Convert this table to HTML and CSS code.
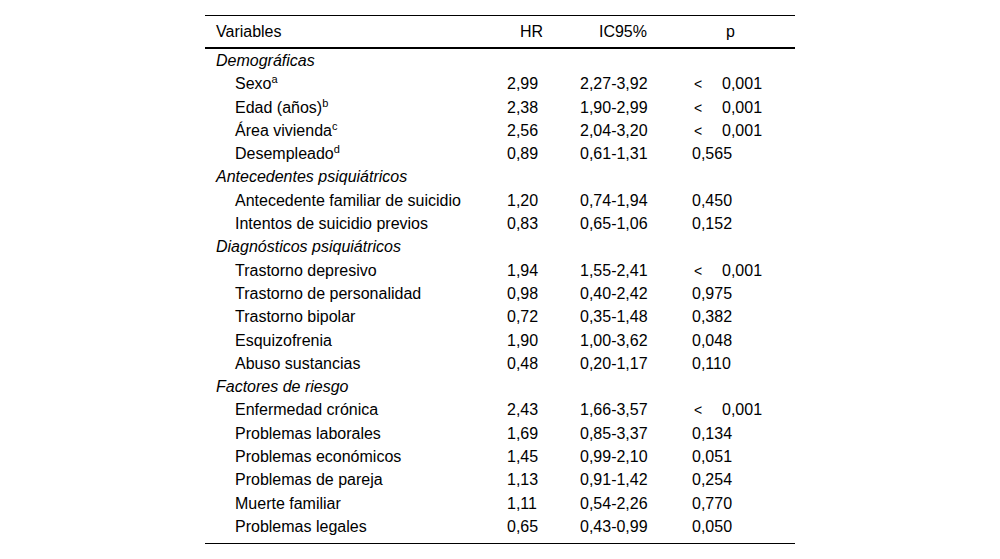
FILE: index.html
```html
<!DOCTYPE html>
<html lang="es">
<head>
<meta charset="utf-8">
<title>Tabla</title>
<link rel="stylesheet" href="styles.css">
</head>
<body>
<table class="tbl">
  <colgroup>
    <col class="c-var">
    <col class="c-hr">
    <col class="c-ic">
    <col class="c-p">
  </colgroup>
  <thead>
    <tr>
      <th class="h-var">Variables</th>
      <th class="h-hr">HR</th>
      <th class="h-ic">IC95%</th>
      <th class="h-p">p</th>
    </tr>
  </thead>
  <tbody>
    <tr class="sec"><td><em>Demográficas</em></td><td></td><td></td><td></td></tr>
    <tr><td class="ind">Sexo<sup>a</sup></td><td>2,99</td><td>2,27-3,92</td><td><span class="lt">&lt;</span>0,001</td></tr>
    <tr><td class="ind">Edad (años)<sup>b</sup></td><td>2,38</td><td>1,90-2,99</td><td><span class="lt">&lt;</span>0,001</td></tr>
    <tr><td class="ind">Área vivienda<sup>c</sup></td><td>2,56</td><td>2,04-3,20</td><td><span class="lt">&lt;</span>0,001</td></tr>
    <tr><td class="ind">Desempleado<sup>d</sup></td><td>0,89</td><td>0,61-1,31</td><td>0,565</td></tr>
    <tr class="sec"><td><em>Antecedentes psiquiátricos</em></td><td></td><td></td><td></td></tr>
    <tr><td class="ind">Antecedente familiar de suicidio</td><td>1,20</td><td>0,74-1,94</td><td>0,450</td></tr>
    <tr><td class="ind">Intentos de suicidio previos</td><td>0,83</td><td>0,65-1,06</td><td>0,152</td></tr>
    <tr class="sec"><td><em>Diagnósticos psiquiátricos</em></td><td></td><td></td><td></td></tr>
    <tr><td class="ind">Trastorno depresivo</td><td>1,94</td><td>1,55-2,41</td><td><span class="lt">&lt;</span>0,001</td></tr>
    <tr><td class="ind">Trastorno de personalidad</td><td>0,98</td><td>0,40-2,42</td><td>0,975</td></tr>
    <tr><td class="ind">Trastorno bipolar</td><td>0,72</td><td>0,35-1,48</td><td>0,382</td></tr>
    <tr><td class="ind">Esquizofrenia</td><td>1,90</td><td>1,00-3,62</td><td>0,048</td></tr>
    <tr><td class="ind">Abuso sustancias</td><td>0,48</td><td>0,20-1,17</td><td>0,110</td></tr>
    <tr class="sec"><td><em>Factores de riesgo</em></td><td></td><td></td><td></td></tr>
    <tr><td class="ind">Enfermedad crónica</td><td>2,43</td><td>1,66-3,57</td><td><span class="lt">&lt;</span>0,001</td></tr>
    <tr><td class="ind">Problemas laborales</td><td>1,69</td><td>0,85-3,37</td><td>0,134</td></tr>
    <tr><td class="ind">Problemas económicos</td><td>1,45</td><td>0,99-2,10</td><td>0,051</td></tr>
    <tr><td class="ind">Problemas de pareja</td><td>1,13</td><td>0,91-1,42</td><td>0,254</td></tr>
    <tr><td class="ind">Muerte familiar</td><td>1,11</td><td>0,54-2,26</td><td>0,770</td></tr>
    <tr class="last"><td class="ind">Problemas legales</td><td>0,65</td><td>0,43-0,99</td><td>0,050</td></tr>
  </tbody>
</table>
</body>
</html>
```
FILE: styles.css
```css
html, body {
  margin: 0;
  padding: 0;
  background: #ffffff;
}

body {
  font-family: "Liberation Sans", Arial, sans-serif;
  font-size: 16px;
  color: #000000;
}

.tbl {
  margin: 15px auto 0;
  width: 590px;
  table-layout: fixed;
  border-collapse: collapse;
  border-top: 1px solid #000;
  border-bottom: 1px solid #000;
}

.c-var { width: 292px; }
.c-hr { width: 73px; }
.c-ic { width: 112px; }
.c-p { width: 113px; }

.tbl th {
  font-weight: normal;
  height: 31px;
  padding: 0;
  line-height: 18px;
  vertical-align: middle;
  border-bottom: 2px solid #000;
}

.tbl th.h-var {
  text-align: left;
  padding-left: 11px;
}

.tbl th.h-hr {
  text-align: right;
  padding-right: 27px;
}

.tbl th.h-ic {
  text-align: right;
  padding-right: 35px;
}

.tbl th.h-p {
  text-align: left;
  padding-left: 44px;
}

.tbl td {
  padding: 0 0 0 10px;
  height: 23.3px;
  line-height: 23.3px;
  white-space: nowrap;
  vertical-align: middle;
}

.tbl td:first-child {
  padding-left: 11px;
}

.tbl td.ind {
  padding-left: 30px;
}

.tbl tr.last td {
  padding-bottom: 5px;
}

.tbl em {
  font-style: italic;
}

.tbl sup {
  font-size: 11px;
  line-height: 0;
  vertical-align: 6px;
}

.lt {
  display: inline-block;
  width: 30px;
  padding-left: 2px;
  box-sizing: border-box;
  font-size: 14px;
  line-height: 1;
}
```
